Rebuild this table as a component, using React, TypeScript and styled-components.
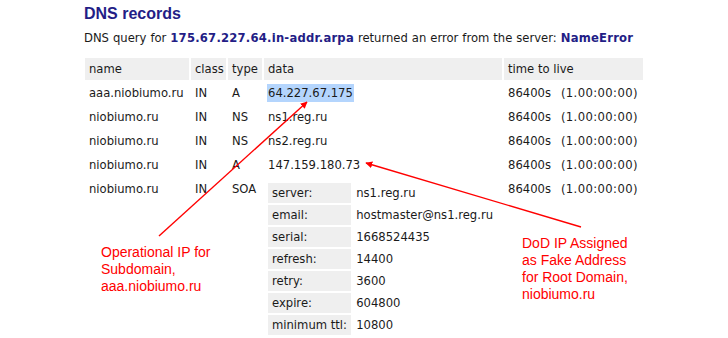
import styled, { createGlobalStyle } from "styled-components";

const GlobalStyle = createGlobalStyle`
  body {
    margin: 0;
    background: #ffffff;
  }
`;

const records = [
  { name: "aaa.niobiumo.ru", cls: "IN", type: "A", data: "64.227.67.175", selected: true },
  { name: "niobiumo.ru", cls: "IN", type: "NS", data: "ns1.reg.ru" },
  { name: "niobiumo.ru", cls: "IN", type: "NS", data: "ns2.reg.ru" },
  { name: "niobiumo.ru", cls: "IN", type: "A", data: "147.159.180.73" },
];

const soa = [
  ["server:", "ns1.reg.ru"],
  ["email:", "hostmaster@ns1.reg.ru"],
  ["serial:", "1668524435"],
  ["refresh:", "14400"],
  ["retry:", "3600"],
  ["expire:", "604800"],
  ["minimum ttl:", "10800"],
];

const Ttl = () => (
  <>
    86400s<TtlHuman>(1.00:00:00)</TtlHuman>
  </>
);

const App = () => {
  return (
    <Page>
      <GlobalStyle />
      <Title>DNS records</Title>
      <Summary>
        DNS query for <Strong>175.67.227.64.in-addr.arpa</Strong> returned an
        error from the server: <Strong>NameError</Strong>
      </Summary>
      <RecordsTable>
        <colgroup>
          <col style={{ width: 104 }} />
          <col style={{ width: 35 }} />
          <col style={{ width: 34 }} />
          <col style={{ width: 238 }} />
          <col style={{ width: 139 }} />
        </colgroup>
        <thead>
          <tr>
            <Th>name</Th>
            <Th>class</Th>
            <Th>type</Th>
            <Th>data</Th>
            <Th>time to live</Th>
          </tr>
        </thead>
        <tbody>
          {records.map((r, i) => (
            <tr key={i}>
              <Td>{r.name}</Td>
              <Td>{r.cls}</Td>
              <Td>{r.type}</Td>
              <Td>{r.selected ? <Selected>{r.data}</Selected> : r.data}</Td>
              <Td>
                <Ttl />
              </Td>
            </tr>
          ))}
          <tr>
            <Td>niobiumo.ru</Td>
            <Td>IN</Td>
            <Td>SOA</Td>
            <Td>
              <SoaTable>
                <tbody>
                  {soa.map(([k, v]) => (
                    <tr key={k}>
                      <SoaKey>{k}</SoaKey>
                      <SoaValue>{v}</SoaValue>
                    </tr>
                  ))}
                </tbody>
              </SoaTable>
            </Td>
            <Td>
              <Ttl />
            </Td>
          </tr>
        </tbody>
      </RecordsTable>

      <Arrows width="728" height="338" viewBox="0 0 728 338">
        <defs>
          <marker
            id="head"
            viewBox="0 0 10 10"
            refX="9"
            refY="5"
            markerWidth="7"
            markerHeight="7"
            markerUnits="userSpaceOnUse"
            orient="auto"
          >
            <path d="M0 0 L10 5 L0 10 z" fill="#ff0000" />
          </marker>
        </defs>
        <line x1="159" y1="236" x2="307" y2="102" stroke="#ff0000" strokeWidth="1.4" markerEnd="url(#head)" />
        <line x1="581" y1="227" x2="366" y2="163" stroke="#ff0000" strokeWidth="1.4" markerEnd="url(#head)" />
      </Arrows>

      <Note $left={101} $top={244}>
        Operational IP for
        <br />
        Subdomain,
        <br />
        aaa.niobiumo.ru
      </Note>
      <Note $left={522} $top={235}>
        DoD IP Assigned
        <br />
        as Fake Address
        <br />
        for Root Domain,
        <br />
        niobiumo.ru
      </Note>
    </Page>
  );
};

export default App;

const Page = styled.div`
  position: relative;
  width: 728px;
  height: 338px;
  overflow: hidden;
  box-sizing: border-box;
  padding: 5px 0 0 83px;
  font-family: Verdana, "DejaVu Sans", sans-serif;
  font-size: 11.6px;
  line-height: 14px;
  color: #1a1a1a;
`;

const Title = styled.h2`
  margin: 0 0 0 1px;
  font-family: "Liberation Sans", Arial, sans-serif;
  font-size: 16px;
  line-height: 18px;
  font-weight: 700;
  color: #231d86;
`;

const Summary = styled.p`
  margin: 8px 0 0 1px;
  white-space: nowrap;
  word-spacing: 0.3px;
`;

const Strong = styled.b`
  color: #231d86;
  letter-spacing: 0.22px;
`;

const RecordsTable = styled.table`
  margin-top: 11px;
  border-collapse: separate;
  border-spacing: 2px;
  table-layout: fixed;
  width: 562px;
`;

const Th = styled.th`
  padding: 4px;
  text-align: left;
  font-weight: 400;
  background: #efefef;
  white-space: nowrap;
`;

const Td = styled.td`
  padding: 4px;
  vertical-align: top;
  white-space: nowrap;
`;

const TtlHuman = styled.span`
  margin-left: 10px;
  letter-spacing: 0.4px;
`;

const Selected = styled.span`
  background: #b4d5fd;
  padding: 2px 1px;
  margin-left: -1px;
`;

const SoaTable = styled.table`
  margin: -1px 0 0 -2px;
  border-collapse: separate;
  border-spacing: 2px;
`;

const SoaKey = styled.td`
  width: 76px;
  padding: 3px 4px;
  background: #efefef;
  white-space: nowrap;
`;

const SoaValue = styled.td`
  padding: 3px 3px;
  white-space: nowrap;
`;

const Arrows = styled.svg`
  position: absolute;
  left: 0;
  top: 0;
  pointer-events: none;
`;

const Note = styled.div<{ $left: number; $top: number }>`
  position: absolute;
  left: ${(p) => p.$left}px;
  top: ${(p) => p.$top}px;
  font-family: "Liberation Sans", Arial, sans-serif;
  font-size: 14px;
  line-height: 17px;
  color: #ff0000;
`;
